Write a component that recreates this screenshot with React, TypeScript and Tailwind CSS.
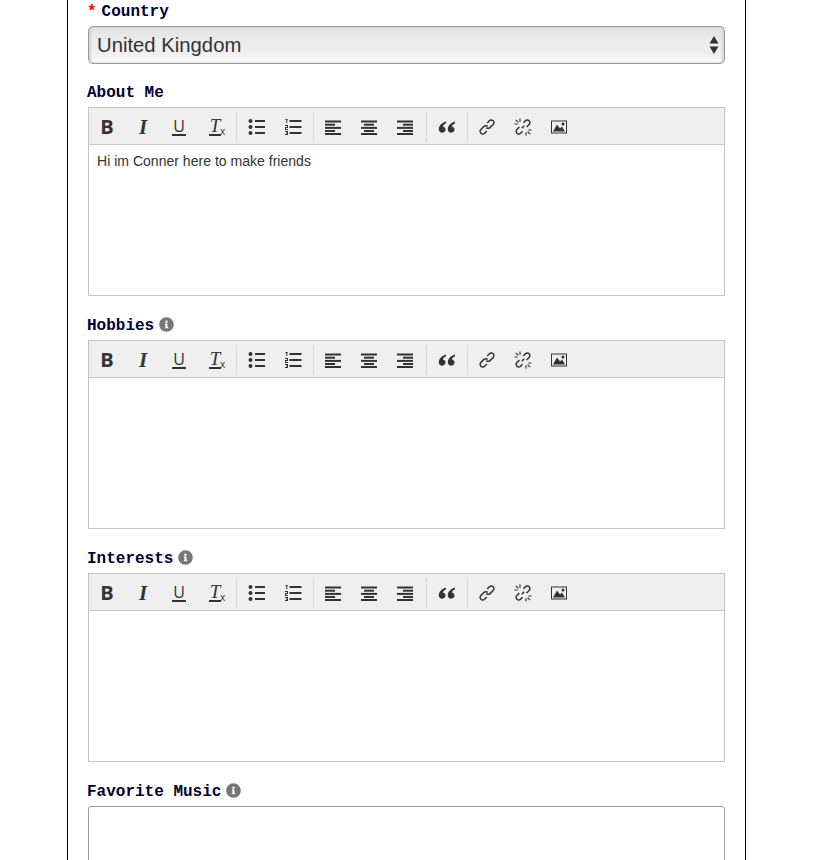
import { FaInfoCircle } from "react-icons/fa";

const labelClass =
  "font-['Liberation_Mono','Courier_New',monospace] text-base font-bold leading-5 text-[#000033]";

const Sep = ({ className }: { className: string }) => (
  <span className={`h-[30px] w-px bg-[#d8d8d8] ${className}`} />
);

const Btn = ({ children }: { children: React.ReactNode }) => (
  <button type="button" className="flex h-full w-9 items-center justify-center text-[#333]">
    {children}
  </button>
);

const Glyph = ({ children }: { children: React.ReactNode }) => (
  <svg width="18" height="18" viewBox="0 0 18 18" fill="#333" stroke="none">
    {children}
  </svg>
);

const serifIcon = "font-['Liberation_Serif',serif] font-bold italic";

const ListUl = () => (
  <Glyph>
    <circle cx="2.5" cy="3" r="2" />
    <circle cx="2.5" cy="9" r="2" />
    <circle cx="2.5" cy="15" r="2" />
    <rect x="7" y="2" width="10" height="2" />
    <rect x="7" y="8" width="10" height="2" />
    <rect x="7" y="14" width="10" height="2" />
  </Glyph>
);

const ListOl = () => (
  <Glyph>
    <rect x="1.5" y="1" width="2" height="1" />
    <rect x="2.3" y="1" width="1" height="4" />
    <rect x="1" y="7" width="3" height="1" />
    <rect x="3" y="8" width="1" height="1" />
    <rect x="1" y="9" width="3" height="1" />
    <rect x="1" y="10" width="1" height="1" />
    <rect x="1" y="11" width="3" height="1" />
    <rect x="1" y="13" width="3" height="1" />
    <rect x="2" y="14.5" width="2" height="1" />
    <rect x="1" y="16" width="3" height="1" />
    <rect x="3" y="13" width="1" height="4" />
    <rect x="5.5" y="2" width="12" height="2" />
    <rect x="5.5" y="8" width="12" height="2" />
    <rect x="5.5" y="14" width="12" height="2" />
  </Glyph>
);

const Align = ({ side }: { side: "left" | "center" | "right" }) => {
  const short = side === "left" ? 1 : side === "center" ? 4 : 7;
  return (
    <Glyph>
      <rect x="1" y="2.5" width="16" height="2" />
      <rect x={short} y="5.7" width="10" height="2" />
      <rect x="1" y="8.9" width="16" height="2" />
      <rect x={short} y="12" width="10" height="2" />
      <rect x="1" y="15" width="16" height="2" />
    </Glyph>
  );
};

const Quote = () => (
  <svg width="18" height="18" viewBox="-1 0 18 18" fill="#333">
    <path d="M8 3.4C4 4.6.8 7.4.8 11.2c0 2.1 1.5 3.5 3.5 3.5 1.8 0 3.2-1.3 3.2-3.1 0-1.7-1.2-2.9-2.8-3 .4-1.4 1.7-2.5 3.3-3.4z" />
    <path d="M17 3.4c-4 1.2-7.2 4-7.2 7.8 0 2.1 1.5 3.5 3.5 3.5 1.8 0 3.2-1.3 3.2-3.1 0-1.7-1.2-2.9-2.8-3 .4-1.4 1.7-2.5 3.3-3.4z" />
  </svg>
);

const LinkIcon = () => (
  <svg width="18" height="18" viewBox="0 0 18 18" fill="none" stroke="#333" strokeWidth="1.5">
    <path d="M9.2 5 11.4 2.8a2.6 2.6 0 0 1 3.7 0 2.6 2.6 0 0 1 0 3.7L12 9.6a2.6 2.6 0 0 1-3.7 0" />
    <path d="M8.8 13 6.6 15.2a2.6 2.6 0 0 1-3.7 0 2.6 2.6 0 0 1 0-3.7L6 8.4a2.6 2.6 0 0 1 3.7 0" />
  </svg>
);

const UnlinkIcon = () => (
  <svg width="18" height="18" viewBox="0 0 18 18" fill="none" stroke="#333" strokeWidth="1.5">
    <path d="M9.5 4.8 11.4 2.8a2.6 2.6 0 0 1 3.7 0 2.6 2.6 0 0 1 0 3.7L12.6 9" />
    <path d="M8.5 13.2 6.6 15.2a2.6 2.6 0 0 1-3.7 0 2.6 2.6 0 0 1 0-3.7L5.4 9" />
    <path d="M10.2 7.8 7.8 10.2" />
    <path d="M6 .5v3.2M.5 6h3.2M1.8 1.8 4.4 4.4M12 17.5v-3.2M17.5 12h-3.2M16.2 16.2l-2.6-2.6" strokeWidth="1.2" />
  </svg>
);

const ImageIcon = () => (
  <Glyph>
    <path fillRule="evenodd" d="M1 2.5h16v13H1zM2 3.5v11h14v-11z" />
    <path d="M3 13.5 7 6.5l3 4 2-2 3 5z" />
    <circle cx="13" cy="6" r="1.5" />
  </Glyph>
);

const Toolbar = () => (
  <div className="flex h-[37px] items-center border-b border-[#c8c8c8] bg-[#efefef] pt-[2px]">
    <Btn>
      <span className="font-['Open_Sans',sans-serif] text-[20px] font-bold leading-none">B</span>
    </Btn>
    <Btn>
      <span className={`${serifIcon} text-[21px] leading-none`}>I</span>
    </Btn>
    <Btn>
      <span className="border-b-2 border-[#333] px-px font-['Open_Sans',sans-serif] text-[16px] leading-[16px]">U</span>
    </Btn>
    <Btn>
      <span className="relative">
        <span className={`${serifIcon} block border-b-2 border-[#333] px-px text-[19px] font-normal leading-[16px]`}>T</span>
        <span className="absolute -right-[4px] bottom-0 font-['Open_Sans',sans-serif] text-[10px] leading-[10px]">x</span>
      </span>
    </Btn>
    <Sep className="ml-[3px] mr-[2px]" />
    <Btn>
      <ListUl />
    </Btn>
    <Btn>
      <ListOl />
    </Btn>
    <Sep className="ml-[2px] mr-[1px]" />
    <Btn>
      <Align side="left" />
    </Btn>
    <Btn>
      <Align side="center" />
    </Btn>
    <Btn>
      <Align side="right" />
    </Btn>
    <Sep className="ml-[3px] mr-[1px]" />
    <Btn>
      <Quote />
    </Btn>
    <Sep className="ml-[3px] mr-[1px]" />
    <Btn>
      <LinkIcon />
    </Btn>
    <Btn>
      <UnlinkIcon />
    </Btn>
    <Btn>
      <ImageIcon />
    </Btn>
  </div>
);

const Editor = ({ text }: { text?: string }) => (
  <div className="h-[189px] border border-[#c4c4c4] bg-white">
    <Toolbar />
    <div className="px-2 py-[6px] font-['Liberation_Sans',Arial,sans-serif] text-[14.05px] leading-5 text-[#333]">
      {text}
    </div>
  </div>
);

const Label = ({ text, info }: { text: string; info?: boolean }) => (
  <div className="-ml-px flex h-5 items-center gap-[5px]">
    <span className={labelClass}>{text}</span>
    {info && <FaInfoCircle className="-mt-[3px] text-[15px] text-[#777]" />}
  </div>
);

export default function App() {
  return (
    <div className="h-[860px] overflow-hidden bg-white">
      <div className="ml-[67px] h-full w-[679px] border-x border-black pl-5 pr-5 pt-[2px]">
        <div className="-ml-px flex h-5 items-center">
          <span className={`${labelClass} mr-[5px] text-[#f00]`}>*</span>
          <span className={labelClass}>Country</span>
        </div>
        <div className="relative mt-[4px] h-[38px] w-[637px]">
          <select
            defaultValue="United Kingdom"
            className="h-full w-full appearance-none rounded-[5px] border border-[#999] bg-[linear-gradient(#e2e2e2,#ececec_40%,#efefef_70%,#fbfbfb)] pl-2 font-['Liberation_Sans',Arial,sans-serif] text-[20.3px] text-[#333] shadow-[inset_2px_0_2px_#d4d4d4,inset_-2px_0_2px_#d4d4d4]"
          >
            <option>United Kingdom</option>
          </select>
          <svg className="absolute right-[6px] top-[10px]" width="10" height="18" viewBox="0 0 10 18" fill="#333">
            <path d="M5 0 9.5 7.5H.5zM5 18 .5 10.5h9z" />
          </svg>
        </div>

        <div className="mt-[19px]">
          <Label text="About Me" />
          <div className="mt-[4px] w-[637px]">
            <Editor text="Hi im Conner here to make friends" />
          </div>
          <div className="mt-[20px]">
            <Label text="Hobbies" info />
          </div>
          <div className="mt-[4px] w-[637px]">
            <Editor />
          </div>
          <div className="mt-[20px]">
            <Label text="Interests" info />
          </div>
          <div className="mt-[4px] w-[637px]">
            <Editor />
          </div>
          <div className="mt-[20px]">
            <Label text="Favorite Music" info />
          </div>
          <div className="mt-[4px] h-[100px] w-[637px] rounded-[3px] border border-[#999] bg-white" />
        </div>
      </div>
    </div>
  );
}
